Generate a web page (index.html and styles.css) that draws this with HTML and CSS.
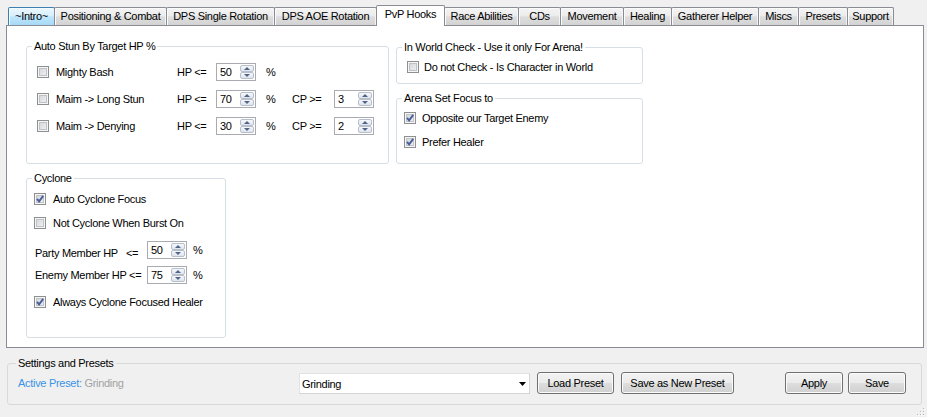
FILE: index.html
```html
<!DOCTYPE html>
<html>
<head>
<meta charset="utf-8">
<title>PvP Hooks</title>
<link rel="stylesheet" href="styles.css">
</head>
<body>
<div class="tabstrip">
  <div class="tab hot w1">~Intro~</div>
  <div class="tab w2">Positioning &amp; Combat</div>
  <div class="tab w3">DPS Single Rotation</div>
  <div class="tab w4">DPS AOE Rotation</div>
  <div class="tab active w5">PvP Hooks</div>
  <div class="tab w6">Race Abilities</div>
  <div class="tab w7">CDs</div>
  <div class="tab w8">Movement</div>
  <div class="tab w9">Healing</div>
  <div class="tab w10">Gatherer Helper</div>
  <div class="tab w11">Miscs</div>
  <div class="tab w12">Presets</div>
  <div class="tab w13">Support</div>
</div>

<div class="panel">
  <div class="group stun">
    <div class="gtitle">Auto Stun By Target HP %</div>
    <div class="stun-rows">
      <div class="cb"><span class="box"></span>Mighty Bash</div>
      <span>HP &lt;=</span>
      <div class="spin"><span class="val">50</span><span class="btns"><i class="up"></i><i class="dn"></i></span></div>
      <span class="pct">%</span>
      <span></span>
      <span></span>

      <div class="cb"><span class="box"></span>Maim -&gt; Long Stun</div>
      <span>HP &lt;=</span>
      <div class="spin"><span class="val">70</span><span class="btns"><i class="up"></i><i class="dn"></i></span></div>
      <span class="pct">%</span>
      <span>CP &gt;=</span>
      <div class="spin"><span class="val">3</span><span class="btns"><i class="up"></i><i class="dn"></i></span></div>

      <div class="cb"><span class="box"></span>Maim -&gt; Denying</div>
      <span>HP &lt;=</span>
      <div class="spin"><span class="val">30</span><span class="btns"><i class="up"></i><i class="dn"></i></span></div>
      <span class="pct">%</span>
      <span>CP &gt;=</span>
      <div class="spin"><span class="val">2</span><span class="btns"><i class="up"></i><i class="dn"></i></span></div>
    </div>
  </div>

  <div class="rightcol">
    <div class="group world">
      <div class="gtitle">In World Check - Use it only For Arena!</div>
      <div class="cb first"><span class="box"></span>Do not Check - Is Character in World</div>
    </div>
    <div class="group focus">
      <div class="gtitle">Arena Set Focus to</div>
      <div class="cb first"><span class="box checked"><svg viewBox="0 0 12 12" width="12" height="12"><path d="M3 5.8 L5.1 8.4 L9.2 2.9" fill="none" stroke="#4a5f9a" stroke-width="1.9"/></svg></span>Opposite our Target Enemy</div>
      <div class="cb second"><span class="box checked"><svg viewBox="0 0 12 12" width="12" height="12"><path d="M3 5.8 L5.1 8.4 L9.2 2.9" fill="none" stroke="#4a5f9a" stroke-width="1.9"/></svg></span>Prefer Healer</div>
    </div>
  </div>

  <div class="group cyclone">
    <div class="gtitle">Cyclone</div>
    <div class="cb c1"><span class="box checked"><svg viewBox="0 0 12 12" width="12" height="12"><path d="M3 5.8 L5.1 8.4 L9.2 2.9" fill="none" stroke="#4a5f9a" stroke-width="1.9"/></svg></span>Auto Cyclone Focus</div>
    <div class="cb c2"><span class="box"></span>Not Cyclone When Burst On</div>
    <div class="hprow party">
      <span class="hplabel">Party Member HP &nbsp;&nbsp;&lt;=</span>
      <div class="spin"><span class="val">50</span><span class="btns"><i class="up"></i><i class="dn"></i></span></div>
      <span class="pct2">%</span>
    </div>
    <div class="hprow enemy">
      <span class="hplabel">Enemy Member HP &lt;=</span>
      <div class="spin"><span class="val">75</span><span class="btns"><i class="up"></i><i class="dn"></i></span></div>
      <span class="pct2">%</span>
    </div>
    <div class="cb c3"><span class="box checked"><svg viewBox="0 0 12 12" width="12" height="12"><path d="M3 5.8 L5.1 8.4 L9.2 2.9" fill="none" stroke="#4a5f9a" stroke-width="1.9"/></svg></span>Always Cyclone Focused Healer</div>
  </div>
</div>

<div class="group presets">
  <div class="gtitle">Settings and Presets</div>
  <div class="prow">
    <div class="ap"><span class="ap-key">Active Preset:</span> <span class="ap-val">Grinding</span></div>
    <div class="combo"><span>Grinding</span><svg width="7" height="4" viewBox="0 0 7 4"><path d="M0 0 H7 L3.5 4 Z" fill="#000"/></svg></div>
    <div class="btn load">Load Preset</div>
    <div class="btn savenew">Save as New Preset</div>
    <div class="btn apply">Apply</div>
    <div class="btn save">Save</div>
  </div>
</div>

<div class="griprow">
  <svg width="8" height="8" viewBox="0 0 8 8">
    <rect x="6" y="0" width="1" height="1" fill="#b8b8b8"/>
    <rect x="3" y="3" width="1" height="1" fill="#b8b8b8"/>
    <rect x="6" y="3" width="1" height="1" fill="#b8b8b8"/>
    <rect x="0" y="6" width="1" height="1" fill="#b8b8b8"/>
    <rect x="3" y="6" width="1" height="1" fill="#b8b8b8"/>
    <rect x="6" y="6" width="1" height="1" fill="#b8b8b8"/>
    <rect x="7" y="1" width="1" height="1" fill="#fff"/>
    <rect x="4" y="4" width="1" height="1" fill="#fff"/>
    <rect x="7" y="4" width="1" height="1" fill="#fff"/>
    <rect x="1" y="7" width="1" height="1" fill="#fff"/>
    <rect x="4" y="7" width="1" height="1" fill="#fff"/>
    <rect x="7" y="7" width="1" height="1" fill="#fff"/>
  </svg>
</div>
</body>
</html>
```

FILE: styles.css
```css
* { box-sizing: border-box; }
html, body { margin: 0; height: 417px; overflow: hidden; }
body {
  background: #f0f0f0;
  font-family: "Liberation Sans", Arial, sans-serif;
  font-size: 11px;
  letter-spacing: -0.3px;
  color: #000;
}

/* ---------- tabs ---------- */
.tabstrip {
  display: flex;
  height: 25px;
  padding: 7px 0 0 8px;
}
.tab {
  height: 18px;
  margin-right: -1px;
  border: 1px solid #898c95;
  border-bottom: none;
  border-radius: 2px 2px 0 0;
  background: linear-gradient(#f4f4f4, #ececec 45%, #dedede 52%, #d3d3d3);
  box-shadow: inset 1px 1px 0 #fbfbfb, inset -1px 0 0 #f4f4f4;
  text-align: center;
  line-height: 17px;
  white-space: nowrap;
}
.tab.hot {
  border-color: #3c7fb1;
  background: linear-gradient(#eaf6fd, #d9f0fc 45%, #bee6fd 52%, #a7d9f5);
  box-shadow: inset 1px 1px 0 #f4fbff;
}
.tab.active {
  height: 21px;
  margin-top: -2px;
  background: #fff;
  box-shadow: none;
  position: relative;
  z-index: 1;
  line-height: 16px;
}
.w1 { width: 47px; }
.w2 { width: 113px; }
.w3 { width: 109px; }
.w4 { width: 103px; }
.w5 { width: 69px; }
.w6 { width: 75px; }
.w7 { width: 43px; }
.w8 { width: 64px; }
.w9 { width: 49px; }
.w10 { width: 88px; }
.w11 { width: 41px; }
.w12 { width: 50px; }
.w13 { width: 47px; }

/* ---------- panel ---------- */
.panel {
  margin-left: 6px;
  width: 918px;
  height: 323px;
  border: 1px solid #898c95;
  background: #fff;
  padding: 20px 0 0 19px;
  display: grid;
  grid-template-columns: 363px 247px;
  grid-template-rows: auto auto;
  align-content: start;
  column-gap: 7px;
  row-gap: 14px;
  align-items: start;
}

.group {
  border: 1px solid #d5dfe5;
  border-radius: 3px;
}
.gtitle {
  display: table;
  height: 13px;
  line-height: 13px;
  margin: -7px 0 0 5px;
  padding: 0 2px;
  background: #fff;
  white-space: nowrap;
}

/* checkbox */
.cb {
  display: flex;
  align-items: center;
  gap: 7px;
  height: 14px;
  white-space: nowrap;
}
.box {
  flex: none;
  width: 12px;
  height: 12px;
  border: 1px solid #8e8f8f;
  background: linear-gradient(135deg, #cfd2d6, #f5f5f5);
  box-shadow: inset 0 0 0 1px #f6f6f6, inset 0 0 0 2px #bfc3c8;
  display: flex;
}
.box svg { margin: -1px; }

/* spinner */
.spin {
  display: flex;
  width: 40px;
  height: 18px;
  border: 1px solid #a9abb0;
  background: #fff;
  padding: 1px;
}
.val {
  flex: 1;
  padding-left: 2px;
  line-height: 14px;
}
.btns {
  width: 14px;
  display: flex;
  flex-direction: column;
}
.btns i {
  flex: 1;
  border: 1px solid #b7bfcc;
  border-radius: 2px;
  background: linear-gradient(#f7f8fa, #dfe4ec);
  display: flex;
  align-items: center;
  justify-content: center;
}
.btns i.up::after {
  content: "";
  border-left: 3px solid transparent;
  border-right: 3px solid transparent;
  border-bottom: 3px solid #4f648a;
}
.btns i.dn::after {
  content: "";
  border-left: 3px solid transparent;
  border-right: 3px solid transparent;
  border-top: 3px solid #4f648a;
}

/* stun group */
.stun {
  height: 118px;
}
.stun-rows {
  margin-top: 10px;
  padding-left: 10px;
  display: grid;
  grid-template-columns: 140px 39px 40px 36px 42px 40px;
  grid-auto-rows: 18px;
  row-gap: 9px;
  align-items: center;
}
.pct { padding-left: 10px; }

/* right column */
.rightcol {
  margin-top: 1px;
  display: flex;
  flex-direction: column;
  gap: 14px;
}
.world { height: 37px; }
.world .cb { margin-top: 6px; padding-left: 10px; gap: 5px; }
.focus { height: 66px; }
.focus .cb { padding-left: 7px; gap: 6px; }
.focus .first { margin-top: 6px; }
.focus .second { margin-top: 10px; }

/* cyclone */
.cyclone {
  grid-column: 1;
  width: 200px;
  height: 160px;
  padding-left: 7px;
}
.cyclone .gtitle { margin-left: -2px; }
.cyclone .c1 { margin-top: 7px; gap: 7px; }
.cyclone .c2 { margin-top: 10px; gap: 7px; }
.cyclone .c3 { margin-top: 11px; gap: 7px; }
.hprow {
  display: grid;
  grid-template-columns: 113px 40px auto;
  align-items: center;
  height: 18px;
}
.hprow.party { margin-top: 11px; }
.hprow.enemy { margin-top: 7px; }
.hplabel { padding-left: 1px; white-space: nowrap; }
.party .hplabel { margin-top: 6px; }
.pct2 { padding-left: 6px; }

/* ---------- presets ---------- */
.presets {
  margin: 15px 0 0 7px;
  width: 915px;
  height: 42px;
  padding: 0 15px 0 10px;
  border-color: #d9d9d9;
}
.presets .gtitle {
  background: #f0f0f0;
  margin-left: -2px;
}
.prow {
  display: flex;
  align-items: center;
  margin-top: 2px;
  height: 22px;
}
.ap { flex: 0 0 281px; white-space: nowrap; }
.ap-key { color: #3b94e6; }
.ap-val { color: #a2a2a2; }
.combo {
  width: 231px;
  height: 21px;
  margin: 1px 7px 0 0;
  background: #fff;
  border: 1px solid #d4d4d4;
  border-left-color: #e2e2e2;
  border-top-color: #e2e2e2;
  display: flex;
  align-items: center;
  justify-content: space-between;
  padding: 0 3px 0 2px;
}
.btn {
  height: 22px;
  border: 1px solid #707070;
  border-radius: 3px;
  background: linear-gradient(#f3f3f3, #ebebeb 48%, #dddddd 52%, #d0d0d0);
  box-shadow: inset 0 0 0 1px #fbfbfb;
  display: flex;
  align-items: center;
  justify-content: center;
  white-space: nowrap;
}
.load { width: 77px; margin-right: 7px; }
.savenew { width: 113px; }
.apply { width: 58px; margin-left: auto; }
.save { width: 58px; margin-left: 5px; }

.griprow {
  display: flex;
  justify-content: flex-end;
  padding: 3px 2px 0 0;
}
.griprow svg { display: block; }
```
